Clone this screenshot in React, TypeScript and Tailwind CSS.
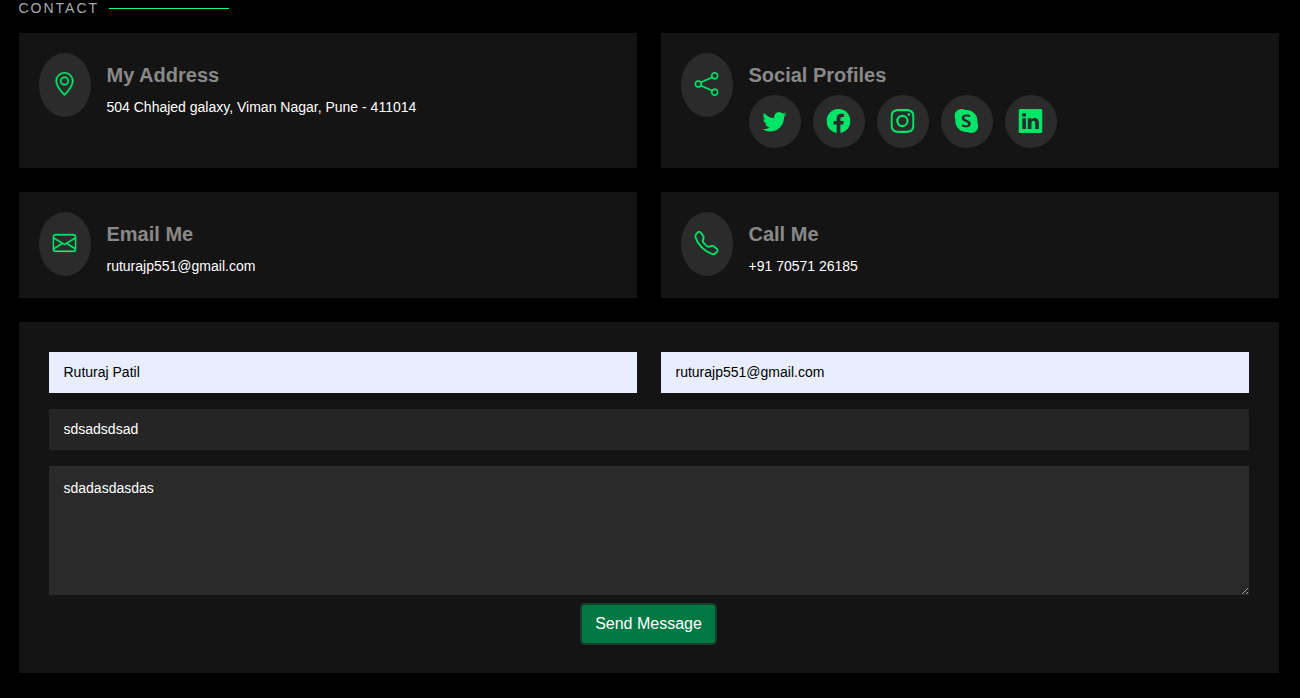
import type { ReactNode } from "react";
import {
  BsEnvelope,
  BsFacebook,
  BsGeoAlt,
  BsInstagram,
  BsLinkedin,
  BsShare,
  BsSkype,
  BsTelephone,
  BsTwitter,
} from "react-icons/bs";

type CardProps = { icon: ReactNode; title: string; children: ReactNode };

function InfoCard({ icon, title, children }: CardProps) {
  return (
    <article className="flex items-start bg-[#141414] p-5">
      <div className="flex h-16 w-[52px] shrink-0 justify-center rounded-[50%] bg-[#2b2b2b] pt-[19px] text-[#00e468] [&_svg]:-translate-x-[0.5px] [&_svg]:stroke-[0.2]">
        {icon}
      </div>
      <div className="ml-4 pt-2.5">
        <h3 className="text-[20px] leading-6 font-bold text-[#898989]">{title}</h3>
        {children}
      </div>
    </article>
  );
}

function Detail({ children }: { children: ReactNode }) {
  return <p className="mt-2 text-[14px] leading-[24px] text-white">{children}</p>;
}

const socials = [
  { name: "Twitter", Icon: BsTwitter },
  { name: "Facebook", Icon: BsFacebook },
  { name: "Instagram", Icon: BsInstagram },
  { name: "Skype", Icon: BsSkype },
  { name: "LinkedIn", Icon: BsLinkedin },
];

export default function App() {
  return (
    <main className="h-[698px] overflow-hidden bg-black pr-[21.5px] pl-[18.5px] font-['Liberation_Sans',Arial,sans-serif]">
      <header className="flex h-[33px] items-start">
        <h2 className="text-[14px] leading-[17px] tracking-[2px] text-[#aaaaaa]">CONTACT</h2>
        <span className="mt-2 ml-[9.5px] h-px w-[120px] bg-[#12ff8b]" />
      </header>

      <section className="grid grid-cols-2 grid-rows-[135px_106px] gap-6">
        <InfoCard icon={<BsGeoAlt size={24} />} title="My Address">
          <Detail>504 Chhajed galaxy, Viman Nagar, Pune - 411014</Detail>
        </InfoCard>
        <InfoCard icon={<BsShare size={24} />} title="Social Profiles">
          <div className="mt-2 flex gap-3">
            {socials.map(({ name, Icon }) => (
              <a
                key={name}
                href="#"
                aria-label={name}
                className="flex h-[53px] w-[52px] items-start justify-center rounded-[50%] bg-[#2b2b2b] pt-3.5 text-[#00e468]"
              >
                <Icon size={24} className="-translate-x-[0.5px]" />
              </a>
            ))}
          </div>
        </InfoCard>
        <InfoCard icon={<BsEnvelope size={24} />} title="Email Me">
          <Detail>ruturajp551@gmail.com</Detail>
        </InfoCard>
        <InfoCard icon={<BsTelephone size={24} />} title="Call Me">
          <Detail>+91 70571 26185</Detail>
        </InfoCard>
      </section>

      <form className="mt-6 flex h-[351px] flex-col bg-[#141414] p-[30px] text-[14px]">
        <div className="grid grid-cols-2 gap-6">
          <input
            aria-label="Name"
            defaultValue="Ruturaj Patil"
            className="h-[41px] min-w-0 bg-[#e8eefe] px-[15px] pb-0.5 text-black outline-none"
          />
          <input
            aria-label="Email"
            defaultValue="ruturajp551@gmail.com"
            className="h-[41px] min-w-0 bg-[#e8eefe] px-[15px] pb-0.5 text-black outline-none"
          />
        </div>
        <input
          aria-label="Subject"
          defaultValue="sdsadsdsad"
          className="mt-4 h-[41px] shrink-0 bg-[#252525] px-[15px] pb-0.5 text-white outline-none"
        />
        <textarea
          aria-label="Message"
          defaultValue="sdadasdasdas"
          className="mt-4 h-[129px] shrink-0 resize bg-[#2a2a2a] px-[15px] py-3 leading-[21px] text-white outline-none"
        />
        <button
          type="button"
          className="mt-[10px] h-[38px] w-[133px] shrink-0 self-center rounded-[3px] bg-[#007843] text-[16px] leading-6 text-white shadow-[0_0_0_2px_#193d2c]"
        >
          Send Message
        </button>
      </form>
    </main>
  );
}
